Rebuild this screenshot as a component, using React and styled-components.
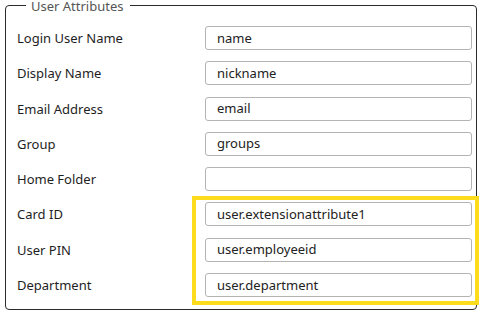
import React from "react";
import styled, { createGlobalStyle } from "styled-components";

const GlobalStyle = createGlobalStyle`
  html, body {
    margin: 0;
    padding: 0;
    background: #ffffff;
  }
  body {
    font-family: "Noto Sans", "Open Sans", sans-serif;
  }
`;

const Page = styled.div`
  width: 485px;
  height: 315px;
  padding: 0 0 0 5px;
  box-sizing: border-box;
  overflow: hidden;
`;

const Group = styled.fieldset`
  position: relative;
  margin: 0;
  width: 472px;
  height: 310px;
  box-sizing: border-box;
  border: 1px solid #2b2b2b;
  border-radius: 4px;
  padding: 15px 4px 0 11px;
`;

const Legend = styled.legend`
  margin-left: 9px;
  padding: 1px 6px 0 5px;
  height: 10px;
  font-size: 13px;
  line-height: 10px;
  color: #555555;
`;

const Rows = styled.div`
  display: grid;
  grid-template-columns: 188px 1fr;
  grid-auto-rows: 24px;
  row-gap: 11.3px;
  align-items: center;
`;

const Label = styled.div`
  font-size: 13px;
  color: #1e1e1e;
  white-space: nowrap;
`;

const Field = styled.input`
  height: 24px;
  width: 100%;
  box-sizing: border-box;
  border: 1px solid #b4b4b4;
  border-radius: 3px;
  padding: 0 0 1px 11px;
  font-family: "Noto Sans", "Open Sans", sans-serif;
  font-size: 13px;
  color: #222222;
  background: #ffffff;
  outline: none;
`;

const Highlight = styled.div`
  position: absolute;
  left: 186px;
  top: 185px;
  width: 287px;
  height: 109px;
  box-sizing: border-box;
  border: 4px solid #fddc1e;
  pointer-events: none;
`;

const attributes = [
  ["Login User Name", "name"],
  ["Display Name", "nickname"],
  ["Email Address", "email"],
  ["Group", "groups"],
  ["Home Folder", ""],
  ["Card ID", "user.extensionattribute1"],
  ["User PIN", "user.employeeid"],
  ["Department", "user.department"],
];

export default function App() {
  return (
    <Page>
      <GlobalStyle />
      <Group>
        <Legend>User Attributes</Legend>
        <Rows>
          {attributes.map(([label, value]) => (
            <React.Fragment key={label}>
              <Label>{label}</Label>
              <Field defaultValue={value} readOnly />
            </React.Fragment>
          ))}
        </Rows>
        <Highlight />
      </Group>
    </Page>
  );
}
